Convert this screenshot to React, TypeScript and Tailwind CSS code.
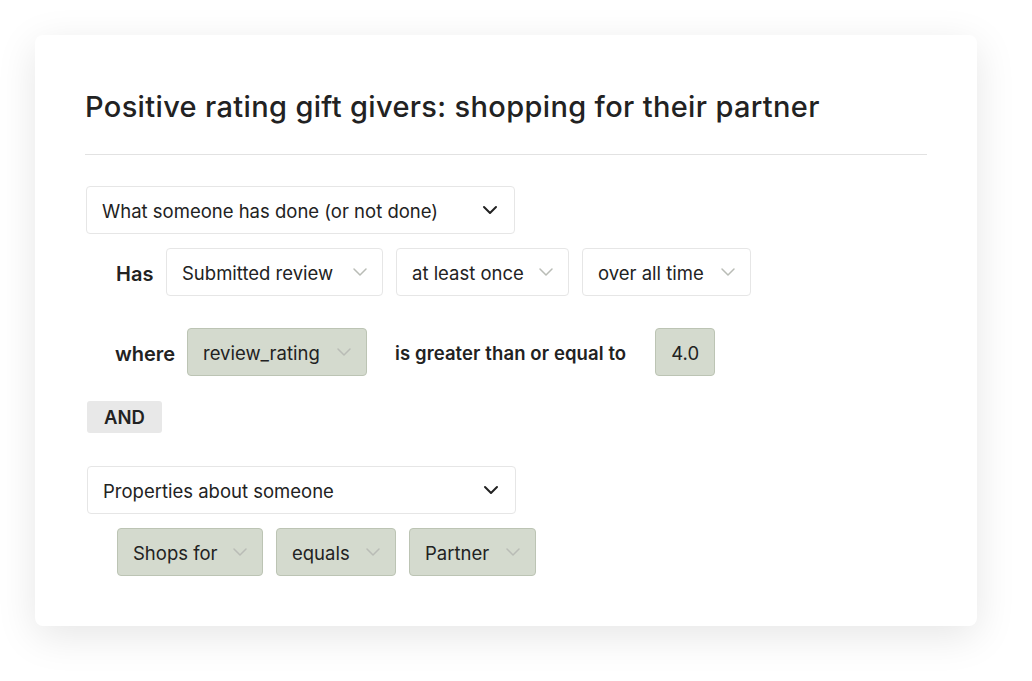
import React from "react";

function Chevron({ dark }: { dark?: boolean }) {
  return (
    <svg
      width="16"
      height="10"
      viewBox="0 0 16 10"
      fill="none"
      className={dark ? "text-[#222]" : "text-[#b9bcb6]"}
    >
      <path d="M2 2l6 6 6-6" stroke="currentColor" strokeWidth={dark ? 2 : 1.5} strokeLinecap="round" strokeLinejoin="round" />
    </svg>
  );
}

function Select({ label, w, green }: { label: string; w: string; green?: boolean }) {
  return (
    <div
      className={`${w} h-[48px] flex items-center justify-between pl-[15px] pr-[14px] rounded-[4px] border ${
        green ? "bg-[#d4dace] border-[#bcc4b4]" : "bg-white border-[#e6e6e6]"
      }`}
    >
      <span className="pt-[3px] text-[18.5px] text-[#222]">{label}</span>
      <Chevron />
    </div>
  );
}

function BigSelect({ label }: { label: string }) {
  return (
    <div className="w-[429px] h-[48px] flex items-center justify-between pl-[15px] pr-[16px] rounded-[4px] border border-[#e6e6e6] bg-white">
      <span className="pt-[3px] text-[18.5px] text-[#222]">{label}</span>
      <Chevron dark />
    </div>
  );
}

export default function App() {
  return (
    <div className="w-[1032px] h-[681px] bg-white pt-[35px] pl-[35px]" style={{ fontFamily: "Inter, 'Noto Sans', sans-serif" }}>
      <div className="w-[942px] h-[591px] bg-white rounded-[8px] shadow-[0_10px_40px_rgba(0,0,0,0.10)] px-[50px] pt-[52px]">
        <h1 className="text-[29px] font-medium text-[#222] tracking-[0.35px] leading-[40px]">
          Positive rating gift givers: shopping for their partner
        </h1>
        <div className="mt-[27px] h-px bg-[#e2e2e2]" />

        <div className="mt-[31px] ml-[1px]">
          <BigSelect label="What someone has done (or not done)" />
        </div>

        <div className="mt-[14px] ml-[31px] flex items-center">
          <span className="pt-[3px] text-[20px] font-semibold text-[#222] w-[50px]">Has</span>
          <div className="flex gap-[13px]">
            <Select label="Submitted review" w="w-[217px]" />
            <Select label="at least once" w="w-[173px]" />
            <Select label="over all time" w="w-[169px]" />
          </div>
        </div>

        <div className="mt-[32px] ml-[30px] flex items-center">
          <span className="pt-[3px] text-[20px] font-semibold text-[#222] w-[72px]">where</span>
          <Select label="review_rating" w="w-[180px]" green />
          <span className="pt-[3px] ml-[28px] text-[18.5px] font-semibold text-[#222] tracking-[0.1px]">is greater than or equal to</span>
          <div className="ml-[29px] w-[60px] h-[48px] pt-[3px] flex items-center justify-center rounded-[4px] border bg-[#d4dace] border-[#bcc4b4] text-[18.5px] text-[#222]">
            4.0
          </div>
        </div>

        <div className="mt-[25px] ml-[2px] w-[75px] h-[32px] pt-[2px] flex items-center justify-center rounded-[3px] bg-[#e8e8e8] text-[18.5px] font-semibold text-[#222]">
          AND
        </div>

        <div className="mt-[33px] ml-[2px]">
          <BigSelect label="Properties about someone" />
        </div>

        <div className="mt-[14px] ml-[32px] flex gap-[13px]">
          <Select label="Shops for" w="w-[146px]" green />
          <Select label="equals" w="w-[120px]" green />
          <Select label="Partner" w="w-[127px]" green />
        </div>
      </div>
    </div>
  );
}
